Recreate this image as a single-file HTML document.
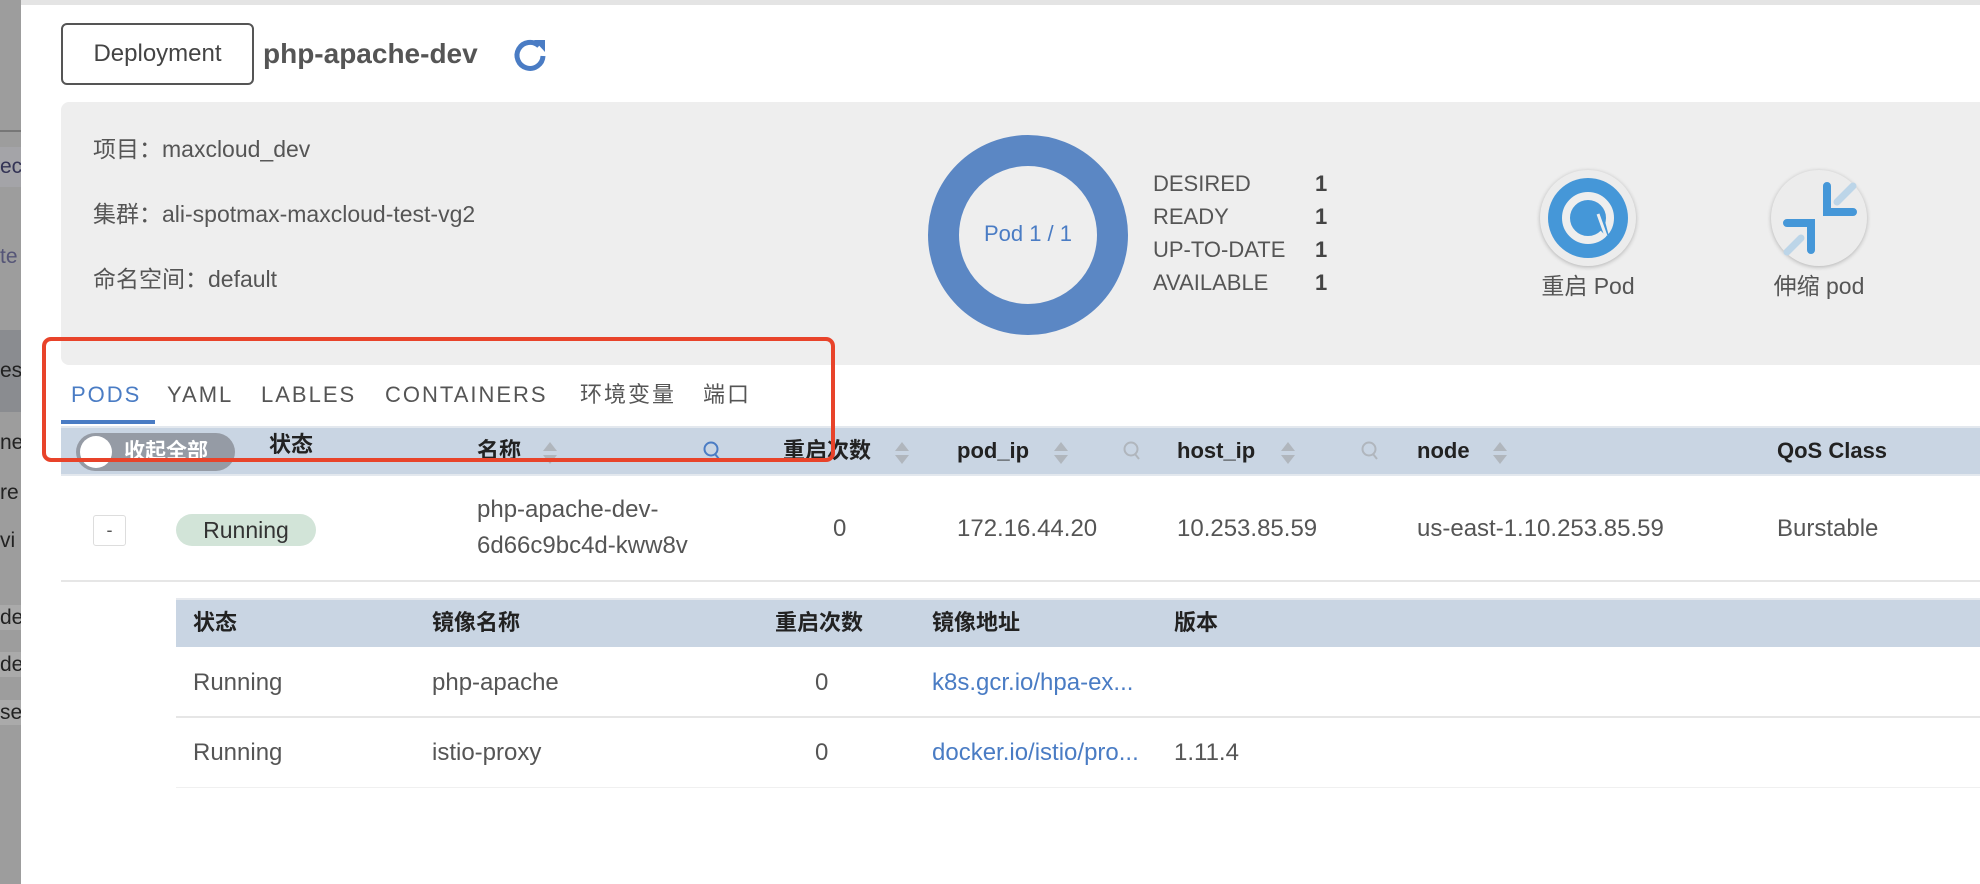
<!DOCTYPE html>
<html><head><meta charset="utf-8"><style>
*{margin:0;padding:0;box-sizing:border-box}
body{width:1980px;height:884px;overflow:hidden;background:#fff;position:relative;font-family:"Liberation Sans","Noto Sans CJK SC",sans-serif;color:#555;font-size:24px}
.a{position:absolute;white-space:nowrap;line-height:1.2}
.th{font-weight:600;color:#222;font-size:22px}
.t{font-size:24px}
.tab{font-size:22px;letter-spacing:2px;top:382px}
.sort{position:absolute;width:0;height:0;border-left:7px solid transparent;border-right:7px solid transparent}
</style></head><body>
<div class="a" style="left:0;top:0;width:21px;height:884px;background:#9d9d9d"></div>
<div class="a" style="left:0;top:130px;width:21px;height:2px;background:#777"></div>
<div class="a" style="left:0;top:147px;width:21px;height:40px;background:#a4a4a8;color:#335;font-size:21px;line-height:40px;overflow:hidden">ec</div>
<div class="a" style="left:0;top:236px;width:21px;height:42px;color:#557;font-size:21px;line-height:42px;overflow:hidden">te</div>
<div class="a" style="left:0;top:330px;width:21px;height:82px;background:#8a8c90;color:#222;line-height:82px;overflow:hidden;font-size:21px">es</div>
<div class="a" style="left:0;top:430px;width:21px;color:#222;overflow:hidden;font-size:21px">ne</div>
<div class="a" style="left:0;top:480px;width:21px;color:#222;overflow:hidden;font-size:21px">re</div>
<div class="a" style="left:0;top:528px;width:21px;color:#222;overflow:hidden;font-size:21px">vi</div>
<div class="a" style="left:0;top:605px;width:21px;color:#222;overflow:hidden;background:#aaa;font-size:21px">de</div>
<div class="a" style="left:0;top:652px;width:21px;color:#222;overflow:hidden;background:#aaa;font-size:21px">de</div>
<div class="a" style="left:0;top:700px;width:21px;color:#222;overflow:hidden;background:#aaa;font-size:21px">se</div>
<div class="a" style="left:21px;top:0;width:1959px;height:5px;background:#e4e4e4"></div>

<div class="a" style="left:61px;top:23px;width:193px;height:62px;border:2px solid #555;border-radius:6px;text-align:center;line-height:58px;font-size:24px;color:#444">Deployment</div>
<div class="a" style="left:263px;top:37px;font-size:28px;font-weight:600;color:#555">php-apache-dev</div>
<svg class="a" style="left:512px;top:37px" width="36" height="36" viewBox="0 0 36 36"><path d="M27 9 A13 13 0 1 0 31 19" fill="none" stroke="#4a7cc4" stroke-width="5"/><path d="M22 3 L33 3 L33 15 Z" fill="#4a7cc4"/></svg>

<div class="a" style="left:61px;top:102px;width:1930px;height:263px;background:#eeeeee;border-radius:8px"></div>
<div class="a" style="left:93px;top:136px;font-size:23px">项目：maxcloud_dev</div>
<div class="a" style="left:93px;top:201px;font-size:23px">集群：ali-spotmax-maxcloud-test-vg2</div>
<div class="a" style="left:93px;top:266px;font-size:23px">命名空间：default</div>
<div class="a" style="left:928px;top:135px;width:200px;height:200px;border-radius:50%;border:31px solid #5b87c4"></div>
<div class="a" style="left:928px;top:221px;width:200px;text-align:center;color:#4a7cc4;font-size:22px">Pod 1 / 1</div>
<div class="a" style="left:1153px;top:167px;line-height:33px;font-size:22px;color:#555">DESIRED<br>READY<br>UP-TO-DATE<br>AVAILABLE</div>
<div class="a" style="left:1315px;top:167px;line-height:33px;font-size:22px;color:#444;font-weight:600">1<br>1<br>1<br>1</div>

<div class="a" style="left:1540px;top:170px;width:96px;height:96px;border-radius:50%;background:#ececec;box-shadow:0 1px 4px rgba(0,0,0,.25)"></div>
<svg class="a" style="left:1540px;top:170px" width="96" height="96" viewBox="0 0 96 96"><circle cx="48" cy="48" r="40" fill="#4597d8"/><circle cx="48" cy="48" r="22" fill="none" stroke="#eee" stroke-width="8"/><path d="M48 48 L62 40 L70 70 Z" fill="#4597d8"/><path d="M58 44 L66 66" stroke="#eee" stroke-width="3"/></svg>
<div class="a" style="left:1520px;top:273px;width:136px;text-align:center;font-size:23px">重启 Pod</div>
<div class="a" style="left:1771px;top:170px;width:96px;height:96px;border-radius:50%;background:#ececec;box-shadow:0 1px 4px rgba(0,0,0,.25)"></div>
<svg class="a" style="left:1771px;top:170px" width="96" height="96" viewBox="0 0 96 96" fill="none" stroke-linecap="round"><path d="M56 16 V42 H82" stroke="#4597d8" stroke-width="8"/><path d="M16 53 H40 V80" stroke="#4597d8" stroke-width="8"/><path d="M66 32 L82 16 M16 82 L30 68" stroke="#bcd5e8" stroke-width="7"/></svg>
<div class="a" style="left:1751px;top:273px;width:136px;text-align:center;font-size:23px">伸缩 pod</div>

<div class="a tab" style="left:71px;color:#4a7cc4">PODS</div>
<div class="a tab" style="left:167px">YAML</div>
<div class="a tab" style="left:261px">LABLES</div>
<div class="a tab" style="left:385px">CONTAINERS</div>
<div class="a tab" style="left:580px">环境变量</div>
<div class="a tab" style="left:703px">端口</div>
<div class="a" style="left:61px;top:420px;width:94px;height:4px;background:#4a7cc4"></div>

<div class="a" style="left:61px;top:426px;width:1930px;height:50px;background:#c9d5e3;border-top:2px solid #e3e8ee;border-bottom:2px solid #e3e8ee"></div>
<div class="a" style="left:76px;top:433px;width:159px;height:38px;border-radius:19px;background:#959ba5"></div>
<div class="a" style="left:80px;top:436px;width:32px;height:32px;border-radius:50%;background:#fff"></div>
<div class="a" style="left:124px;top:439px;color:#fff;font-weight:600;font-size:21px">收起全部</div>
<div class="a th" style="left:269px;top:432px">状态</div>
<div class="a th" style="left:477px;top:438px">名称</div>
<div class="sort" style="left:543px;top:442px;border-bottom:9px solid #b0b6bd"></div><div class="sort" style="left:543px;top:455px;border-top:9px solid #b0b6bd"></div>
<svg class="a" style="left:702px;top:440px" width="20" height="22"><circle cx="9" cy="9" r="6.5" fill="none" stroke="#4a7cc4" stroke-width="2"/><path d="M13 14 L17 19" stroke="#4a7cc4" stroke-width="2"/></svg>
<div class="a th" style="left:783px;top:438px">重启次数</div>
<div class="sort" style="left:895px;top:442px;border-bottom:9px solid #b0b6bd"></div><div class="sort" style="left:895px;top:455px;border-top:9px solid #b0b6bd"></div>
<div class="a th" style="left:957px;top:438px">pod_ip</div>
<div class="sort" style="left:1054px;top:442px;border-bottom:9px solid #b0b6bd"></div><div class="sort" style="left:1054px;top:455px;border-top:9px solid #b0b6bd"></div>
<svg class="a" style="left:1122px;top:440px" width="20" height="22"><circle cx="9" cy="9" r="6.5" fill="none" stroke="#b0b6bd" stroke-width="2"/><path d="M13 14 L17 19" stroke="#b0b6bd" stroke-width="2"/></svg>
<div class="a th" style="left:1177px;top:438px">host_ip</div>
<div class="sort" style="left:1281px;top:442px;border-bottom:9px solid #b0b6bd"></div><div class="sort" style="left:1281px;top:455px;border-top:9px solid #b0b6bd"></div>
<svg class="a" style="left:1360px;top:440px" width="20" height="22"><circle cx="9" cy="9" r="6.5" fill="none" stroke="#b0b6bd" stroke-width="2"/><path d="M13 14 L17 19" stroke="#b0b6bd" stroke-width="2"/></svg>
<div class="a th" style="left:1417px;top:438px">node</div>
<div class="sort" style="left:1493px;top:442px;border-bottom:9px solid #b0b6bd"></div><div class="sort" style="left:1493px;top:455px;border-top:9px solid #b0b6bd"></div>
<div class="a th" style="left:1777px;top:438px">QoS Class</div>

<div class="a" style="left:93px;top:515px;width:33px;height:31px;border:1px solid #ddd;border-radius:3px;text-align:center;line-height:28px;font-size:18px">-</div>
<div class="a" style="left:176px;top:514px;width:140px;height:32px;border-radius:16px;background:#d2e4d8;text-align:center;line-height:32px;color:#333;font-size:23px">Running</div>
<div class="a t" style="left:477px;top:492px;line-height:36px">php-apache-dev-<br>6d66c9bc4d-kww8v</div>
<div class="a t" style="left:833px;top:515px">0</div>
<div class="a t" style="left:957px;top:515px">172.16.44.20</div>
<div class="a t" style="left:1177px;top:515px">10.253.85.59</div>
<div class="a t" style="left:1417px;top:515px">us-east-1.10.253.85.59</div>
<div class="a t" style="left:1777px;top:515px">Burstable</div>
<div class="a" style="left:61px;top:580px;width:1930px;height:2px;background:#e6e6e6"></div>

<div class="a" style="left:176px;top:598px;width:1810px;height:49px;background:#c9d5e3;border-top:2px solid #e6e9ee"></div>
<div class="a th" style="left:193px;top:610px">状态</div>
<div class="a th" style="left:432px;top:610px">镜像名称</div>
<div class="a th" style="left:775px;top:610px">重启次数</div>
<div class="a th" style="left:932px;top:610px">镜像地址</div>
<div class="a th" style="left:1174px;top:610px">版本</div>
<div class="a t" style="left:193px;top:669px">Running</div>
<div class="a t" style="left:432px;top:669px">php-apache</div>
<div class="a t" style="left:815px;top:669px">0</div>
<div class="a t" style="left:932px;top:669px;color:#4a7cc4">k8s.gcr.io/hpa-ex...</div>
<div class="a" style="left:176px;top:716px;width:1810px;height:2px;background:#e6e6e6"></div>
<div class="a t" style="left:193px;top:739px">Running</div>
<div class="a t" style="left:432px;top:739px">istio-proxy</div>
<div class="a t" style="left:815px;top:739px">0</div>
<div class="a t" style="left:932px;top:739px;color:#4a7cc4">docker.io/istio/pro...</div>
<div class="a t" style="left:1174px;top:739px">1.11.4</div>
<div class="a" style="left:176px;top:787px;width:1810px;height:1px;background:#f0f0f0"></div>

<div class="a" style="left:42px;top:337px;width:793px;height:125px;border:4px solid #e8432a;border-radius:9px"></div>
</body></html>
